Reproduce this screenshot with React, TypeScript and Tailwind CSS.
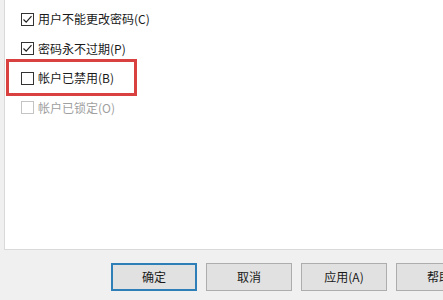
import React from 'react';

const font = { fontFamily: '"Noto Sans CJK SC", "Microsoft YaHei", sans-serif' };

type Item = { label: string; checked: boolean; disabled?: boolean };

const items: Item[] = [
  { label: '用户不能更改密码(C)', checked: true },
  { label: '密码永不过期(P)', checked: true },
  { label: '帐户已禁用(B)', checked: false },
  { label: '帐户已锁定(O)', checked: false, disabled: true },
];

const CheckBox: React.FC<{ checked: boolean; disabled?: boolean }> = ({ checked, disabled }) => (
  <span
    className={`flex h-[13px] w-[13px] shrink-0 items-center justify-center border bg-white ${
      disabled ? 'border-[#c4c4c4]' : 'border-[#333333]'
    }`}
  >
    {checked && (
      <svg width="11" height="11" viewBox="0 0 11 11">
        <polyline points="1.5,5.5 4.2,8.2 9.5,2.2" fill="none" stroke="#222" strokeWidth="1.2" />
      </svg>
    )}
  </span>
);

export default function App() {
  return (
    <div className="relative h-[300px] w-[443px] overflow-hidden bg-[#f0f0f0]" style={font}>
      {/* Panel */}
      <div className="ml-[4px] h-[250px] border-b border-l border-[#d9d9d9] bg-white pl-[16px] pt-[4.5px]">
        {items.map((it) => (
          <div key={it.label} className="flex h-[29.5px] items-center gap-[4px]">
            <CheckBox checked={it.checked} disabled={it.disabled} />
            <span className={`text-[12px] leading-none ${it.disabled ? 'text-[#a0a0a0]' : 'text-[#1a1a1a]'}`}>
              {it.label}
            </span>
          </div>
        ))}
      </div>

      {/* Highlight annotation */}
      <div className="absolute left-[6px] top-[59px] h-[37px] w-[131px] border-[3px] border-[#d8413f]" />

      {/* Buttons */}
      <div className="flex gap-[9px] pl-[111px] pt-[13px]">
        <button className="h-[28px] w-[86px] shrink-0 border-2 border-[#2e7fb8] bg-[#e1e1e1] text-[12px] text-[#1a1a1a]">
          确定
        </button>
        <button className="h-[28px] w-[86px] shrink-0 border border-[#adadad] bg-[#e1e1e1] text-[12px] text-[#1a1a1a]">
          取消
        </button>
        <button className="h-[28px] w-[86px] shrink-0 border border-[#adadad] bg-[#e1e1e1] text-[12px] text-[#1a1a1a]">
          应用(A)
        </button>
        <button className="h-[28px] w-[86px] shrink-0 border border-[#adadad] bg-[#e1e1e1] text-[12px] text-[#1a1a1a]">
          帮助
        </button>
      </div>
    </div>
  );
}
